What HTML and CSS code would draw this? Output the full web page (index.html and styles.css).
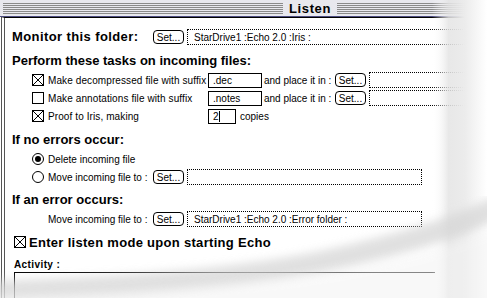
FILE: index.html
```html
<!DOCTYPE html>
<html lang="en">
<head>
    <meta charset="UTF-8">
    <title>Listen</title>
    <link rel="stylesheet" href="styles.css">
</head>
<body>
    <div class="window">
        <div class="titlebar">
            <div class="stripes"></div>
            <div class="title">Listen</div>
            <div class="stripes"></div>
        </div>

        <div class="content">
            <div class="row folder-row">
                <span class="heading label-monitor">Monitor this folder:</span>
                <span class="btn">Set...</span>
                <span class="path path-long">StarDrive1 :Echo 2.0 :Iris :</span>
            </div>

            <div class="heading section">Perform these tasks on incoming files:</div>

            <div class="row task">
                <svg class="box" width="12" height="12"><rect x="0.5" y="0.5" width="11" height="11" fill="#fff" stroke="#000"/><path d="M1 1L11 11M11 1L1 11" stroke="#000"/></svg>
                <span class="label-task">Make decompressed file with suffix</span>
                <span class="field field-suffix">.dec</span>
                <span class="place">and place it in :</span>
                <span class="btn">Set...</span>
                <span class="path path-long"></span>
            </div>
            <div class="row task">
                <svg class="box" width="12" height="12"><rect x="0.5" y="0.5" width="11" height="11" fill="#fff" stroke="#000"/></svg>
                <span class="label-task">Make annotations file with suffix</span>
                <span class="field field-suffix">.notes</span>
                <span class="place">and place it in :</span>
                <span class="btn">Set...</span>
                <span class="path path-long"></span>
            </div>
            <div class="row task">
                <svg class="box" width="12" height="12"><rect x="0.5" y="0.5" width="11" height="11" fill="#fff" stroke="#000"/><path d="M1 1L11 11M11 1L1 11" stroke="#000"/></svg>
                <span class="label-task">Proof to Iris, making</span>
                <span class="field field-copies">2<span class="caret"></span></span>
                <span class="copies">copies</span>
            </div>

            <div class="heading section section-noerr">If no errors occur:</div>

            <div class="row task radio-first">
                <svg class="box" width="12" height="12"><circle cx="6" cy="6" r="5.5" fill="#fff" stroke="#000"/><circle cx="6" cy="6" r="3" fill="#000"/></svg>
                <span>Delete incoming file</span>
            </div>
            <div class="row task">
                <svg class="box" width="12" height="12"><circle cx="6" cy="6" r="5.5" fill="#fff" stroke="#000"/></svg>
                <span class="label-move">Move incoming file to :</span>
                <span class="btn">Set...</span>
                <span class="path path-short"></span>
            </div>

            <div class="heading section section-err">If an error occurs:</div>

            <div class="row task error-row">
                <span class="label-move">Move incoming file to :</span>
                <span class="btn">Set...</span>
                <span class="path path-short">StarDrive1 :Echo 2.0 :Error folder :</span>
            </div>

            <div class="row listen-row">
                <svg class="box" width="12" height="12"><rect x="0.5" y="0.5" width="11" height="11" fill="#fff" stroke="#000"/><path d="M1 1L11 11M11 1L1 11" stroke="#000"/></svg>
                <span class="heading listen-text">Enter listen mode upon starting Echo</span>
            </div>

            <div class="activity-label">Activity :</div>
            <div class="activity"></div>
        </div>

        <!-- torn edge fade over the right and bottom -->
        <svg class="fade" width="487" height="298">
            <defs>
                <linearGradient id="right" x1="0" x2="1" y1="0" y2="0">
                    <stop offset="0" stop-color="#fff" stop-opacity="0"/>
                    <stop offset="0.3" stop-color="#e4e4e4" stop-opacity="0.85"/>
                    <stop offset="0.6" stop-color="#ececec"/>
                    <stop offset="1" stop-color="#fff"/>
                </linearGradient>
                <filter id="soft"><feGaussianBlur stdDeviation="5"/></filter>
            </defs>
            <rect x="432" y="0" width="55" height="298" fill="url(#right)"/>
            <path d="M-20 292 Q 220 286 340 258 T 500 205" fill="none" stroke="#d6d6d6" stroke-width="22" filter="url(#soft)" opacity="0.75"/>
            <path d="M-20 310 L-20 296 Q 220 292 350 268 T 500 218 L500 310 Z" fill="#f4f4f4" opacity="0.55" filter="url(#soft)"/>
        </svg>
    </div>
</body>
</html>
```

FILE: styles.css
```css
body {
    margin: 0;
    overflow: hidden;
    background: #fff;
    font-family: "Liberation Sans", Arial, sans-serif;
    font-size: 10px;
    color: #000;
}

.window {
    position: relative;
    width: 620px;
    height: 298px;
    overflow: hidden;
}

.titlebar {
    display: flex;
    align-items: center;
    height: 16px;
    padding: 0 3px;
    background: #e8e8ee;
    border-bottom: 1px solid #4c4c80;
}

.stripes {
    flex: 1;
    height: 11px;
    background: repeating-linear-gradient(to bottom, #8a8a8a 0 1px, #e8e8ee 1px 2px);
}

.title {
    padding: 0 6px;
    font-weight: bold;
    font-size: 13px;
    letter-spacing: 0.6px;
}

.content {
    height: 281px;
    margin-left: 1px;
    padding-left: 7px;
    border-top: 1px solid #000;
    border-left: 4px double #555;
    box-sizing: border-box;
}

.heading {
    font-weight: bold;
    font-size: 13px;
}

.row {
    display: flex;
    align-items: center;
    white-space: nowrap;
}

.row > * {
    flex-shrink: 0;
}

.folder-row {
    height: 17px;
    margin-top: 10px;
}

.label-monitor {
    width: 141px;
    letter-spacing: 0.4px;
}

.section {
    height: 16px;
    line-height: 16px;
    margin-top: 8px;
}

.task {
    height: 18px;
    padding-left: 20px;
}

.task .box {
    margin-right: 4px;
}

.section + .task {
    margin-top: 2px;
}

.label-task {
    width: 160px;
    letter-spacing: 0.1px;
    overflow: hidden;
}

.field {
    height: 15px;
    line-height: 14px;
    padding-left: 4px;
    border: 1px solid #000;
    box-sizing: border-box;
}

.field-suffix {
    width: 54px;
}

.field-copies {
    width: 28px;
}

.caret {
    display: inline-block;
    width: 1px;
    height: 11px;
    background: #000;
    vertical-align: -2px;
}

.copies {
    margin-left: 4px;
}

.place {
    width: 71px;
    margin-left: 2px;
}

.btn {
    width: 31px;
    height: 14px;
    line-height: 13px;
    text-align: center;
    border: 1px solid #000;
    border-radius: 4px;
    box-sizing: border-box;
}

.path {
    height: 16px;
    line-height: 15px;
    margin-left: 3px;
    padding-left: 6px;
    border: 1px dotted #000;
    box-sizing: border-box;
}

.path-long {
    width: 400px;
}

.path-short {
    width: 235px;
}

.label-move {
    width: 105px;
}

.section-noerr {
    margin-top: 7px;
}

.radio-first {
    margin-top: 1px;
}

.section-err {
    margin-top: 6px;
}

.error-row {
    padding-left: 36px;
    margin-top: 1px;
}

.listen-row {
    height: 18px;
    margin-top: 5px;
    padding-left: 2px;
}

.listen-row .box {
    margin-right: 3px;
}

.listen-text {
    letter-spacing: 0.3px;
}

.activity-label {
    height: 12px;
    line-height: 12px;
    margin-top: 8px;
    padding-left: 2px;
    font-weight: bold;
    font-size: 10px;
    letter-spacing: 0.4px;
}

.activity {
    width: 420px;
    height: 40px;
    margin-top: 1px;
    margin-left: 2px;
    border-top: 1px solid #000;
    border-left: 1px solid #000;
}

.fade {
    position: absolute;
    left: 0;
    top: 0;
}
```
